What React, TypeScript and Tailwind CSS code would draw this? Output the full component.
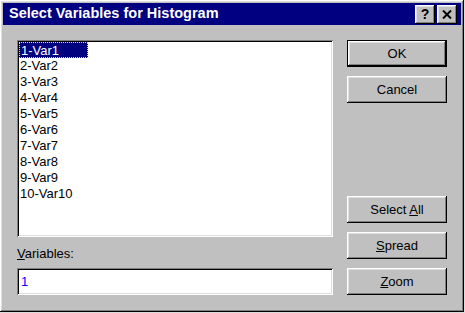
const raised =
  'shadow-[inset_-1px_-1px_#000,inset_1px_1px_#fff,inset_-2px_-2px_#808080,inset_2px_2px_#dfdfdf]';
const sunken =
  'shadow-[inset_1px_1px_#808080,inset_-1px_-1px_#fff,inset_2px_2px_#000,inset_-2px_-2px_#dfdfdf]';

const vars = Array.from({ length: 10 }, (_, i) => `${i + 1}-Var${i + 1}`);

const DlgButton = ({ children, isDefault = false }: { children: React.ReactNode; isDefault?: boolean }) => (
  <div
    className={`flex h-[27px] w-[100px] items-center justify-center bg-[#c0c0c0] text-[13px] text-black ${
      isDefault ? 'border border-black' : ''
    }`}
  >
    <div className={`flex h-full w-full items-center justify-center ${raised}`}>
      <span>{children}</span>
    </div>
  </div>
);

const TitleButton = ({ children }: { children: React.ReactNode }) => (
  <div
    className={`flex h-[19px] w-[20px] items-center justify-center bg-[#c0c0c0] text-[14px] font-bold leading-none text-black ${raised}`}
  >
    {children}
  </div>
);

export default function App() {
  return (
    <div className="h-[313px] w-[465px] bg-[#dcdcdc] font-['Liberation_Sans',Arial,sans-serif]">
      <div className={`flex h-[312px] w-[464px] flex-col bg-[#c0c0c0] p-[3px] ${raised}`}>
        {/* title bar */}
        <div className="flex h-[22px] items-center bg-[#000080] pl-[6px] pr-[4px]">
          <span className="flex-1 text-[14.5px] font-bold text-white">Select Variables for Histogram</span>
          <div className="flex gap-[2px]">
            <TitleButton>?</TitleButton>
            <TitleButton>
              <svg width="10" height="9" viewBox="0 0 10 9">
                <path d="M1 0.5 L9 8.5 M9 0.5 L1 8.5" stroke="#000" strokeWidth="2" />
              </svg>
            </TitleButton>
          </div>
        </div>

        <div className="flex gap-[14px] pl-[14px] pt-[15px]">
          <div className="flex w-[316px] flex-col">
            <div className={`h-[197px] bg-white p-[2px] ${sunken}`}>
              {vars.map((v, i) => (
                <div
                  key={v}
                  className={`h-[16px] pl-[1px] text-[13px] leading-[16px] ${
                    i === 0
                      ? 'w-[69px] border border-dotted border-[#ffff00] bg-[#000080] pl-0 leading-[14px] text-white'
                      : 'text-black'
                  }`}
                >
                  {v}
                </div>
              ))}
            </div>
            <div className="mt-[9px] mb-[6px] h-[16px] text-[13px] leading-[16px] text-black">
              <span className="underline">V</span>ariables:
            </div>
            <div className={`flex h-[27px] items-center bg-white pl-[4px] text-[13px] text-[#0000ff] ${sunken}`}>
              1
            </div>
          </div>

          <div className="flex w-[100px] flex-col">
            <DlgButton isDefault>OK</DlgButton>
            <div className="mt-[9px]">
              <DlgButton>Cancel</DlgButton>
            </div>
            <div className="flex-1" />
            <DlgButton>
              Select <span className="underline">A</span>ll
            </DlgButton>
            <div className="mt-[9px]">
              <DlgButton>
                <span className="underline">S</span>pread
              </DlgButton>
            </div>
            <div className="mt-[9px]">
              <DlgButton>
                <span className="underline">Z</span>oom
              </DlgButton>
            </div>
          </div>
        </div>
      </div>
    </div>
  );
}
